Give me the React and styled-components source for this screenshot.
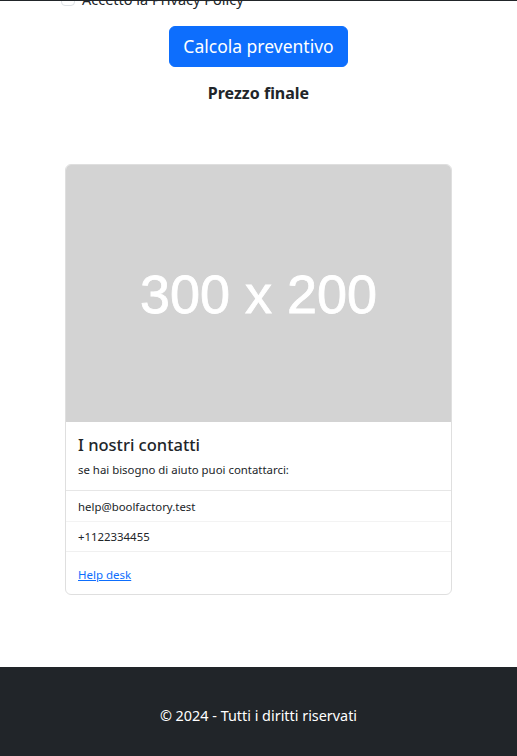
import React from 'react';
import styled, { createGlobalStyle } from 'styled-components';

const GlobalStyle = createGlobalStyle`
  * {
    box-sizing: border-box;
  }
  body {
    margin: 0;
    font-family: "Noto Sans", "Open Sans", sans-serif;
    color: #212529;
    background: #fff;
  }
`;

const TopRule = styled.div`
  position: fixed;
  top: 0;
  left: 0;
  right: 0;
  height: 1px;
  background: #212529;
  z-index: 10;
`;

const Main = styled.main`
  display: flex;
  flex-direction: column;
  align-items: center;
`;

const FormCheck = styled.label`
  align-self: stretch;
  display: flex;
  align-items: center;
  gap: 7px;
  margin-top: -13px;
  padding-left: 61px;
  font-size: 14.5px;
  line-height: 24px;
`;

const Box = styled.span`
  width: 14px;
  height: 14px;
  border: 1px solid #dee2e6;
  border-radius: 4px;
`;

const Button = styled.button`
  margin-top: 15px;
  padding: 6px 13px;
  font-family: inherit;
  font-size: 17.5px;
  line-height: 27px;
  color: #fff;
  background: #0d6efd;
  border: 1px solid #0d6efd;
  border-radius: 6px;
`;

const Price = styled.h5`
  margin: 14px 0 0;
  font-size: 16px;
  font-weight: 700;
  line-height: 24px;
`;

const Card = styled.div`
  width: 387px;
  margin-top: 59px;
  border: 1px solid #dfdfdf;
  border-radius: 6px;
  overflow: hidden;
`;

const Placeholder = styled.div`
  height: 257px;
  display: flex;
  align-items: center;
  justify-content: center;
  background: #d3d3d3;
  color: #fff;
  font-family: "Liberation Sans", Arial, sans-serif;
  font-size: 54px;
  -webkit-text-stroke: 0.8px #fff;
`;

const CardBody = styled.div`
  padding: ${(p) => p.$pad || '10px 12px 11px'};
  border-top: 1px solid ${(p) => p.$line || 'transparent'};
`;

const CardTitle = styled.h5`
  margin: 0 0 4px;
  font-size: 16.5px;
  font-weight: 500;
  line-height: 24px;
`;

const CardText = styled.p`
  margin: 0;
  font-size: 11.4px;
  line-height: 18px;
`;

const List = styled.ul`
  margin: 0;
  padding: 0;
  list-style: none;
`;

const Item = styled.li`
  height: ${(p) => p.$h}px;
  display: flex;
  align-items: center;
  padding: 0 12px;
  font-size: 11.4px;
  border-top: 1px solid ${(p) => p.$line};
`;

const Link = styled.a`
  font-size: 11.5px;
  line-height: 18px;
  color: #0d6efd;
  text-decoration: underline;
`;

const Footer = styled.footer`
  margin-top: 72px;
  height: 96px;
  display: flex;
  align-items: center;
  justify-content: center;
  background: #212529;
  color: #fff;
  font-size: 14.4px;
`;

export default function App() {
  return (
    <>
      <GlobalStyle />
      <TopRule />
      <Main>
        <FormCheck>
          <Box />
          Accetto la Privacy Policy
        </FormCheck>
        <Button>Calcola preventivo</Button>
        <Price>Prezzo finale</Price>
        <Card>
          <Placeholder>300 x 200</Placeholder>
          <CardBody>
            <CardTitle>I nostri contatti</CardTitle>
            <CardText>se hai bisogno di aiuto puoi contattarci:</CardText>
          </CardBody>
          <List>
            <Item $h={31} $line="#e6e6e6">help@boolfactory.test</Item>
            <Item $h={30} $line="#f3f3f3">+1122334455</Item>
          </List>
          <CardBody $pad="10px 12px 10px" $line="#f0f0f0">
            <Link href="#">Help desk</Link>
          </CardBody>
        </Card>
      </Main>
      <Footer>© 2024 - Tutti i diritti riservati</Footer>
    </>
  );
}
